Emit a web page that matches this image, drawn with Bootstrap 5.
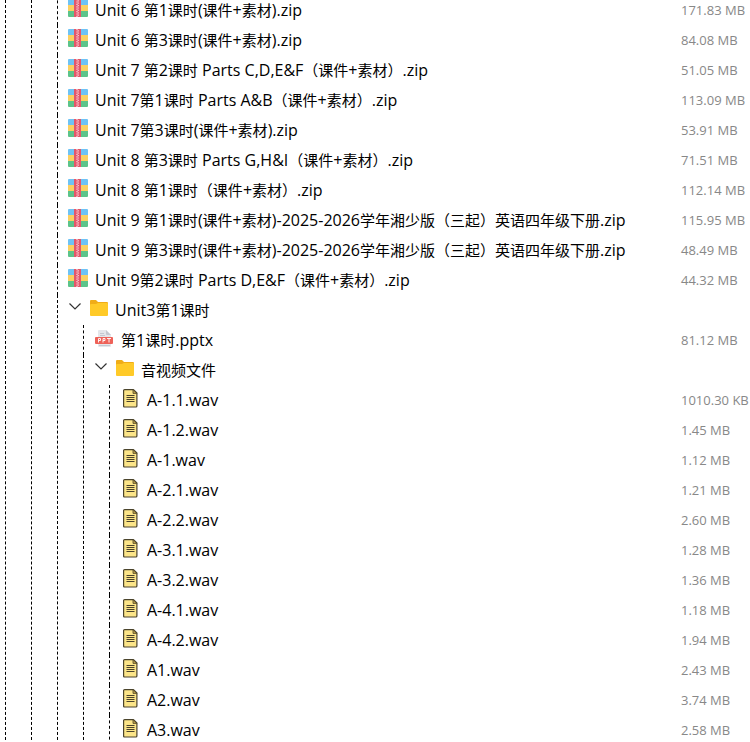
<!DOCTYPE html>
<html lang="zh-CN">
<head>
<meta charset="utf-8">
<meta name="viewport" content="width=device-width, initial-scale=1">
<title>文件列表</title>
<link href="https://cdn.jsdelivr.net/npm/bootstrap@5.3.0/dist/css/bootstrap.min.css" rel="stylesheet">
<style>
body { font-family: "Open Sans", "Noto Sans CJK SC", sans-serif; font-size: 16px; line-height: 30px; color: #000; background: #fff; }
.file-tree { margin-top: -5px; padding-left: 5px; }
.file-tree li { border-left: 1px dashed #000; }
.file-tree ul { padding-left: 25px; }
.entry { height: 30px; padding-left: 10px; }
.entry-name { min-width: 0; color: inherit; }
.entry-name b { font-size: 15px; font-weight: 400; }
.entry-size { width: 69px; font-size: 13px; color: #888; }
.entry-icon { width: 20px; height: 20px; margin: 0 7px 4px 0; flex: none; }
.folder-icon { margin-right: 6px; }
.folder-toggle { line-height: 30px; color: inherit; }
.chevron { width: 14px; height: 14px; margin: 0 7px 8px 0; flex: none; }
.folder-toggle.collapsed .chevron { transform: rotate(-90deg); }
</style>
</head>
<body>
<svg class="d-none" aria-hidden="true">
  <symbol id="zip" viewBox="0 0 20 20">
    <path fill="#6ec3f5" d="M0 2q0-1 1-1h18q1 0 1 1v5H0z"/>
    <path fill="#fbd062" d="M0 7h20v6H0z"/>
    <path fill="#5cc48a" d="M0 13h20v5q0 1-1 1H1q-1 0-1-1z"/>
    <path fill="#e4576a" d="M6 1h7v18H6z"/>
    <path fill="none" stroke="#fbdce0" stroke-width="1.200" stroke-dasharray="1.200 1.200" d="M9 1v18"/>
    <path fill="none" stroke="#fbdce0" stroke-width="1.200" stroke-dasharray="1.200 1.200" stroke-dashoffset="1.200" d="M10.200 1v18"/>
  </symbol>
  <symbol id="folder" viewBox="0 0 20 20">
    <path fill="#f0ad18" d="M1 3q0-1 1-1h5l2 2h9q1 0 1 1v4H1z"/>
    <path fill="#ffca28" d="M1 7q0-1 1-1h5l2-1h9q1 0 1 1v11q0 1-1 1H2q-1 0-1-1z"/>
  </symbol>
  <symbol id="ppt" viewBox="0 0 20 20">
    <path fill="#e4e6ea" d="M4 3q0-1 1-1h7l5 5v11q0 1-1 1H5q-1 0-1-1z"/>
    <path fill="#c5c8d0" d="M12 2l5 5h-4q-1 0-1-1z"/>
    <path fill="#c5c8d0" d="M6 5h4v1H6zM6 7h5v1H6zM5 17h11v1H5z"/>
    <rect fill="#ee6259" x="1" y="9" width="18" height="7" rx="1"/>
    <path fill="none" stroke="#fff" stroke-width=".9" d="M4.500 14.500V10.500h2v2h-2M9 14.500V10.500h2v2H9M13 10.500h4M15 10.500v4"/>
  </symbol>
  <symbol id="doc" viewBox="-1 0 20 20">
    <path fill="#fce588" stroke="#4a432c" stroke-width="1.200" stroke-linejoin="round" d="M2.600 2.600q0-1 1-1H12.500l3.400 3.400V18q0 1-1 1H3.600q-1 0-1-1z"/>
    <path fill="#c7a94b" stroke="#4a432c" stroke-width=".8" d="M12 1.600v3.800h3.800z"/>
    <path stroke="#4a432c" stroke-width="1.200" d="M5.500 7.500h8M5.500 9.500h8M5.500 11.500h8M5.500 13.500h8"/>
  </symbol>
  <symbol id="chevron" viewBox="0 0 14 14">
    <path fill="none" stroke="#333" stroke-width="1.200" d="M1.500 4.500L7 10l5.500-5.500"/>
  </symbol>
</svg>
<main class="overflow-hidden">
<ul class="file-tree list-unstyled mb-0">
 <li><ul class="list-unstyled">
  <li><ul class="list-unstyled">
   <li><div class="entry d-flex align-items-center"><svg class="entry-icon"><use href="#zip"/></svg><span class="entry-name flex-grow-1 text-nowrap">Unit 6 <b>第</b>1<b>课时</b>(<b>课件</b>+<b>素材</b>).zip</span><span class="entry-size text-nowrap">171.83 MB</span></div></li>
   <li><div class="entry d-flex align-items-center"><svg class="entry-icon"><use href="#zip"/></svg><span class="entry-name flex-grow-1 text-nowrap">Unit 6 <b>第</b>3<b>课时</b>(<b>课件</b>+<b>素材</b>).zip</span><span class="entry-size text-nowrap">84.08 MB</span></div></li>
   <li><div class="entry d-flex align-items-center"><svg class="entry-icon"><use href="#zip"/></svg><span class="entry-name flex-grow-1 text-nowrap">Unit 7 <b>第</b>2<b>课时</b> Parts C,D,E&amp;F<b>（课件</b>+<b>素材）</b>.zip</span><span class="entry-size text-nowrap">51.05 MB</span></div></li>
   <li><div class="entry d-flex align-items-center"><svg class="entry-icon"><use href="#zip"/></svg><span class="entry-name flex-grow-1 text-nowrap">Unit 7<b>第</b>1<b>课时</b> Parts A&amp;B<b>（课件</b>+<b>素材）</b>.zip</span><span class="entry-size text-nowrap">113.09 MB</span></div></li>
   <li><div class="entry d-flex align-items-center"><svg class="entry-icon"><use href="#zip"/></svg><span class="entry-name flex-grow-1 text-nowrap">Unit 7<b>第</b>3<b>课时</b>(<b>课件</b>+<b>素材</b>).zip</span><span class="entry-size text-nowrap">53.91 MB</span></div></li>
   <li><div class="entry d-flex align-items-center"><svg class="entry-icon"><use href="#zip"/></svg><span class="entry-name flex-grow-1 text-nowrap">Unit 8 <b>第</b>3<b>课时</b> Parts G,H&amp;I<b>（课件</b>+<b>素材）</b>.zip</span><span class="entry-size text-nowrap">71.51 MB</span></div></li>
   <li><div class="entry d-flex align-items-center"><svg class="entry-icon"><use href="#zip"/></svg><span class="entry-name flex-grow-1 text-nowrap">Unit 8 <b>第</b>1<b>课时（课件</b>+<b>素材）</b>.zip</span><span class="entry-size text-nowrap">112.14 MB</span></div></li>
   <li><div class="entry d-flex align-items-center"><svg class="entry-icon"><use href="#zip"/></svg><span class="entry-name flex-grow-1 text-nowrap">Unit 9 <b>第</b>1<b>课时</b>(<b>课件</b>+<b>素材</b>)-2025-2026<b>学年湘少版（三起）英语四年级下册</b>.zip</span><span class="entry-size text-nowrap">115.95 MB</span></div></li>
   <li><div class="entry d-flex align-items-center"><svg class="entry-icon"><use href="#zip"/></svg><span class="entry-name flex-grow-1 text-nowrap">Unit 9 <b>第</b>3<b>课时</b>(<b>课件</b>+<b>素材</b>)-2025-2026<b>学年湘少版（三起）英语四年级下册</b>.zip</span><span class="entry-size text-nowrap">48.49 MB</span></div></li>
   <li><div class="entry d-flex align-items-center"><svg class="entry-icon"><use href="#zip"/></svg><span class="entry-name flex-grow-1 text-nowrap">Unit 9<b>第</b>2<b>课时</b> Parts D,E&amp;F<b>（课件</b>+<b>素材）</b>.zip</span><span class="entry-size text-nowrap">44.32 MB</span></div></li>
   <li>
    <button type="button" class="folder-toggle entry d-flex align-items-center w-100 border-0 bg-transparent py-0 pe-0 text-start" data-bs-toggle="collapse" data-bs-target="#unit3" aria-expanded="true" aria-controls="unit3"><svg class="chevron"><use href="#chevron"/></svg><svg class="entry-icon folder-icon"><use href="#folder"/></svg><span class="entry-name text-nowrap">Unit3<b>第</b>1<b>课时</b></span></button>
    <ul id="unit3" class="list-unstyled collapse show">
     <li><div class="entry d-flex align-items-center"><svg class="entry-icon"><use href="#ppt"/></svg><span class="entry-name flex-grow-1 text-nowrap"><b>第</b>1<b>课时</b>.pptx</span><span class="entry-size text-nowrap">81.12 MB</span></div></li>
     <li>
      <button type="button" class="folder-toggle entry d-flex align-items-center w-100 border-0 bg-transparent py-0 pe-0 text-start" data-bs-toggle="collapse" data-bs-target="#media" aria-expanded="true" aria-controls="media"><svg class="chevron"><use href="#chevron"/></svg><svg class="entry-icon folder-icon"><use href="#folder"/></svg><span class="entry-name text-nowrap"><b>音视频文件</b></span></button>
      <ul id="media" class="list-unstyled collapse show">
       <li><div class="entry d-flex align-items-center"><svg class="entry-icon"><use href="#doc"/></svg><span class="entry-name flex-grow-1 text-nowrap">A-1.1.wav</span><span class="entry-size text-nowrap">1010.30 KB</span></div></li>
       <li><div class="entry d-flex align-items-center"><svg class="entry-icon"><use href="#doc"/></svg><span class="entry-name flex-grow-1 text-nowrap">A-1.2.wav</span><span class="entry-size text-nowrap">1.45 MB</span></div></li>
       <li><div class="entry d-flex align-items-center"><svg class="entry-icon"><use href="#doc"/></svg><span class="entry-name flex-grow-1 text-nowrap">A-1.wav</span><span class="entry-size text-nowrap">1.12 MB</span></div></li>
       <li><div class="entry d-flex align-items-center"><svg class="entry-icon"><use href="#doc"/></svg><span class="entry-name flex-grow-1 text-nowrap">A-2.1.wav</span><span class="entry-size text-nowrap">1.21 MB</span></div></li>
       <li><div class="entry d-flex align-items-center"><svg class="entry-icon"><use href="#doc"/></svg><span class="entry-name flex-grow-1 text-nowrap">A-2.2.wav</span><span class="entry-size text-nowrap">2.60 MB</span></div></li>
       <li><div class="entry d-flex align-items-center"><svg class="entry-icon"><use href="#doc"/></svg><span class="entry-name flex-grow-1 text-nowrap">A-3.1.wav</span><span class="entry-size text-nowrap">1.28 MB</span></div></li>
       <li><div class="entry d-flex align-items-center"><svg class="entry-icon"><use href="#doc"/></svg><span class="entry-name flex-grow-1 text-nowrap">A-3.2.wav</span><span class="entry-size text-nowrap">1.36 MB</span></div></li>
       <li><div class="entry d-flex align-items-center"><svg class="entry-icon"><use href="#doc"/></svg><span class="entry-name flex-grow-1 text-nowrap">A-4.1.wav</span><span class="entry-size text-nowrap">1.18 MB</span></div></li>
       <li><div class="entry d-flex align-items-center"><svg class="entry-icon"><use href="#doc"/></svg><span class="entry-name flex-grow-1 text-nowrap">A-4.2.wav</span><span class="entry-size text-nowrap">1.94 MB</span></div></li>
       <li><div class="entry d-flex align-items-center"><svg class="entry-icon"><use href="#doc"/></svg><span class="entry-name flex-grow-1 text-nowrap">A1.wav</span><span class="entry-size text-nowrap">2.43 MB</span></div></li>
       <li><div class="entry d-flex align-items-center"><svg class="entry-icon"><use href="#doc"/></svg><span class="entry-name flex-grow-1 text-nowrap">A2.wav</span><span class="entry-size text-nowrap">3.74 MB</span></div></li>
       <li><div class="entry d-flex align-items-center"><svg class="entry-icon"><use href="#doc"/></svg><span class="entry-name flex-grow-1 text-nowrap">A3.wav</span><span class="entry-size text-nowrap">2.58 MB</span></div></li>
      </ul>
     </li>
    </ul>
   </li>
  </ul></li>
 </ul></li>
</ul>
</main>
<script src="https://cdn.jsdelivr.net/npm/bootstrap@5.3.0/dist/js/bootstrap.bundle.min.js"></script>
</body>
</html>
